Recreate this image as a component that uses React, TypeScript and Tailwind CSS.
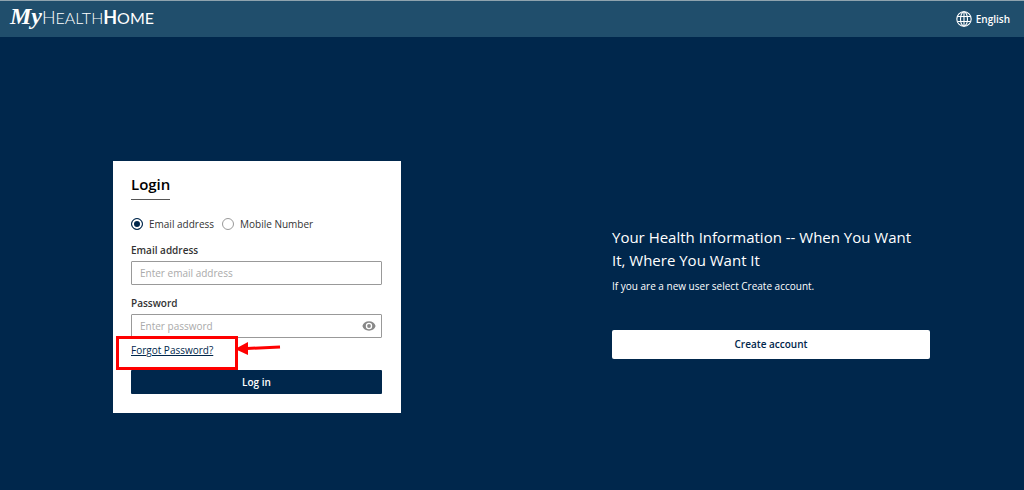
import { useState } from "react";

type Method = "email" | "mobile";

const METHODS: { id: Method; label: string }[] = [
  { id: "email", label: "Email address" },
  { id: "mobile", label: "Mobile Number" },
];

function Logo() {
  return (
    <a
      href="#home"
      aria-label="MyHealthHome"
      className="flex items-baseline pb-1 font-['Lato',sans-serif] text-base leading-6 text-white"
    >
      <span className="font-['Liberation_Serif',serif] text-2xl leading-6 font-bold italic">
        My
      </span>
      <span className="font-light">
        <span className="text-lg leading-6">H</span>EALTH
      </span>
      <span>
        <span className="text-lg leading-6 font-bold">H</span>OME
      </span>
    </a>
  );
}

function GlobeIcon() {
  return (
    <svg
      viewBox="0 0 16 16"
      className="size-4"
      fill="none"
      stroke="currentColor"
      strokeWidth="1.1"
      aria-hidden="true"
    >
      <circle cx="8" cy="8" r="7.2" />
      <ellipse cx="8" cy="8" rx="3.5" ry="7.2" />
      <path d="M8 .8v14.4M1.500 5.500h13M1.500 10.500h13" />
    </svg>
  );
}

function EyeIcon() {
  return (
    <svg viewBox="0 0 14 10" className="h-[10px] w-[14px]" aria-hidden="true">
      <path
        fill="currentColor"
        fillRule="evenodd"
        d="M7 .3C3.8.3 1.2 2.200.4 5c.8 2.800 3.400 4.700 6.600 4.700s5.800-1.900 6.600-4.700C12.800 2.200 10.200.3 7 .3Zm0 1.500a3.200 3.200 0 1 1 0 6.400 3.200 3.200 0 0 1 0-6.400Z"
      />
      <circle cx="7" cy="5" r="1.900" fill="currentColor" />
    </svg>
  );
}

// Red frame and arrow pointing at the reset link
function Callout() {
  return (
    <>
      <span className="pointer-events-none absolute -top-[6px] -bottom-3 -left-[15px] w-[122px] border-3 border-[#ff0000]" />
      <svg
        viewBox="0 0 46 16"
        className="pointer-events-none absolute -top-[3px] left-[104px] h-4 w-[46px]"
        aria-hidden="true"
      >
        <path d="M12 9.500 45 8" stroke="#ff0000" strokeWidth="3" />
        <path d="M0 10 13 3v13Z" fill="#ff0000" />
      </svg>
    </>
  );
}

function LoginCard() {
  const [method, setMethod] = useState<Method>("email");
  const [showPassword, setShowPassword] = useState(false);

  return (
    <form
      onSubmit={(e) => e.preventDefault()}
      className="w-full max-w-72 bg-white pt-3 pr-[19px] pb-[19px] pl-[18px] text-[#333333]"
    >
      <h1 className="inline-block border-b border-[#555555] pb-[3px] text-[15px] leading-[23px] font-semibold text-black">
        Login
      </h1>

      <div className="mt-4 flex items-center gap-2">
        {METHODS.map((item) => (
          <label key={item.id} className="flex items-center gap-[6px] leading-4">
            <input
              type="radio"
              name="method"
              checked={method === item.id}
              onChange={() => setMethod(item.id)}
              className="size-3 appearance-none rounded-full border border-[#999999] checked:border-[#00274c] checked:bg-[#00274c] checked:shadow-[inset_0_0_0_2px_white]"
            />
            {item.label}
          </label>
        ))}
      </div>

      <label htmlFor="login-id" className="mt-[10px] block leading-4 font-semibold">
        Email address
      </label>
      <input
        id="login-id"
        type="text"
        placeholder="Enter email address"
        className="mt-[3px] h-6 w-full rounded-[1px] border border-[#999999] px-2 placeholder:text-[#aaaaaa]"
      />

      <label htmlFor="password" className="mt-[10px] block leading-4 font-semibold">
        Password
      </label>
      <div className="mt-[3px] flex h-6 items-center rounded-[1px] border border-[#999999] pr-[5px] pl-2">
        <input
          id="password"
          type={showPassword ? "text" : "password"}
          placeholder="Enter password"
          className="min-w-0 flex-1 placeholder:text-[#aaaaaa]"
        />
        <button
          type="button"
          aria-label="Show password"
          onClick={() => setShowPassword(!showPassword)}
          className="text-[#888888]"
        >
          <EyeIcon />
        </button>
      </div>

      <div className="relative mt-1 w-fit leading-4">
        <a href="#forgot" className="text-[#00274c] underline">
          Forgot Password?
        </a>
        <Callout />
      </div>

      <button
        type="submit"
        className="mt-3 h-6 w-full rounded-[1px] bg-[#00274c] font-semibold text-white"
      >
        Log in
      </button>
    </form>
  );
}

export default function App() {
  return (
    <div className="min-h-screen bg-[#00274c] font-['Open_Sans',sans-serif] text-[10px] text-white">
      <header className="flex h-[37px] items-center justify-between border-t border-[#8fa3ae] bg-[#204e6c] pr-[14px] pl-[10px]">
        <Logo />
        <button type="button" className="flex items-center gap-1 font-semibold">
          <GlobeIcon />
          English
        </button>
      </header>

      <main className="grid grid-cols-2 items-center pt-[124px]">
        <div className="flex justify-center pl-0.5">
          <LoginCard />
        </div>
        <section className="flex justify-center pt-[10px] pl-1.5">
          <div className="w-full max-w-[318px]">
            <h2 className="pr-4 text-[15px] leading-[23px] font-medium">
              Your Health Information -- When You Want It, Where You Want It
            </h2>
            <p className="mt-1 leading-5 font-medium">
              If you are a new user select Create account.
            </p>
            <button
              type="button"
              className="mt-[34px] h-[29px] w-full rounded-xs bg-white font-semibold text-[#00274c]"
            >
              Create account
            </button>
          </div>
        </section>
      </main>
    </div>
  );
}
